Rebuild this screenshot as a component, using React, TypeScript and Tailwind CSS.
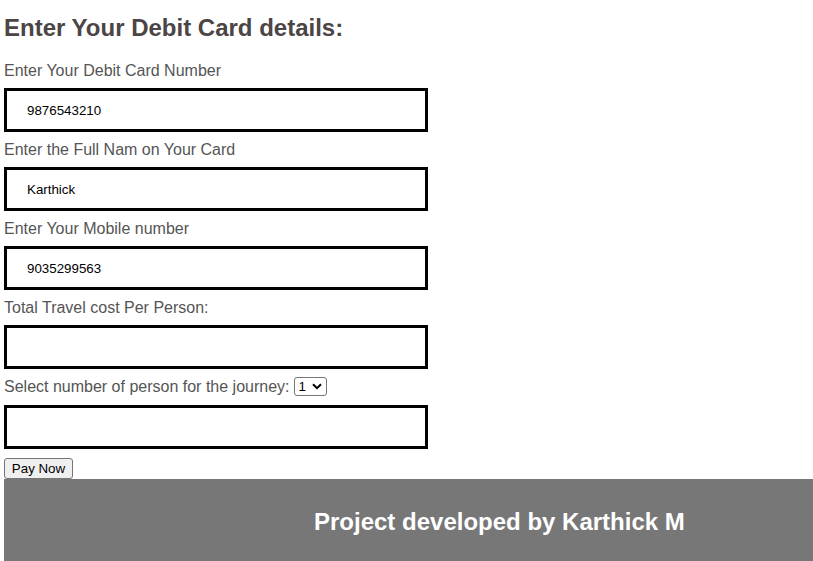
import React from 'react';

const fields = [
  { label: 'Enter Your Debit Card Number', value: '9876543210' },
  { label: 'Enter the Full Nam on Your Card', value: 'Karthick' },
  { label: 'Enter Your Mobile number', value: '9035299563' },
  { label: 'Total Travel cost Per Person:', value: '' },
];

const inputCls =
  "block w-[424px] h-[44px] border-[3px] border-black bg-white pl-[20px] text-[13.33px] text-black outline-none font-['Liberation_Sans',Arial,sans-serif]";

export default function App() {
  return (
    <div className="w-[813px] h-[561px] overflow-hidden bg-white pl-[4px] font-['Liberation_Sans',Arial,sans-serif]">
      <h2 className="mt-[14px] text-[24px] leading-[28px] font-bold text-[#4b4545]">
        Enter Your Debit Card details:
      </h2>

      <form className="mt-[19px]" onSubmit={(e) => e.preventDefault()}>
        {fields.map((f, i) => (
          <div key={f.label} className={i === 0 ? '' : 'mt-[8px]'}>
            <label className="block h-[18px] text-[16px] leading-[20px] text-[#555]">{f.label}</label>
            <input className={`${inputCls} mt-[9px]`} defaultValue={f.value} readOnly />
          </div>
        ))}

        <div className="mt-[8px] flex h-[19px] items-center gap-[4px] text-[16px] leading-[18px] text-[#555]">
          <span className="pt-[1px]">Select number of person for the journey:</span>
          <div className="relative">
            <select
              defaultValue="1"
              className="h-[19px] w-[33px] appearance-none rounded-[3px] border border-[#767676] bg-white pl-[4px] text-[13.33px] leading-[17px] text-black outline-none"
            >
              <option>1</option>
              <option>2</option>
              <option>3</option>
              <option>4</option>
            </select>
            <svg
              className="pointer-events-none absolute right-[5px] top-[6px]"
              width="10"
              height="7"
              viewBox="0 0 10 7"
            >
              <path d="M1 1.2 L5 5.2 L9 1.2" fill="none" stroke="#000" strokeWidth="2" />
            </svg>
          </div>
        </div>

        <input className={`${inputCls} mt-[9px]`} readOnly />

        <button
          type="submit"
          className="mt-[9px] block h-[21px] w-[69px] rounded-[3px] border border-[#767676] bg-[#efefef] text-[13.33px] leading-[19px] text-black"
        >
          Pay Now
        </button>
      </form>

      <footer className="flex h-[82px] w-[809px] items-center bg-[#777777] pl-[310px] pt-[3px]">
        <span className="text-[24px] font-bold text-white">Project developed by Karthick M</span>
      </footer>
    </div>
  );
}
